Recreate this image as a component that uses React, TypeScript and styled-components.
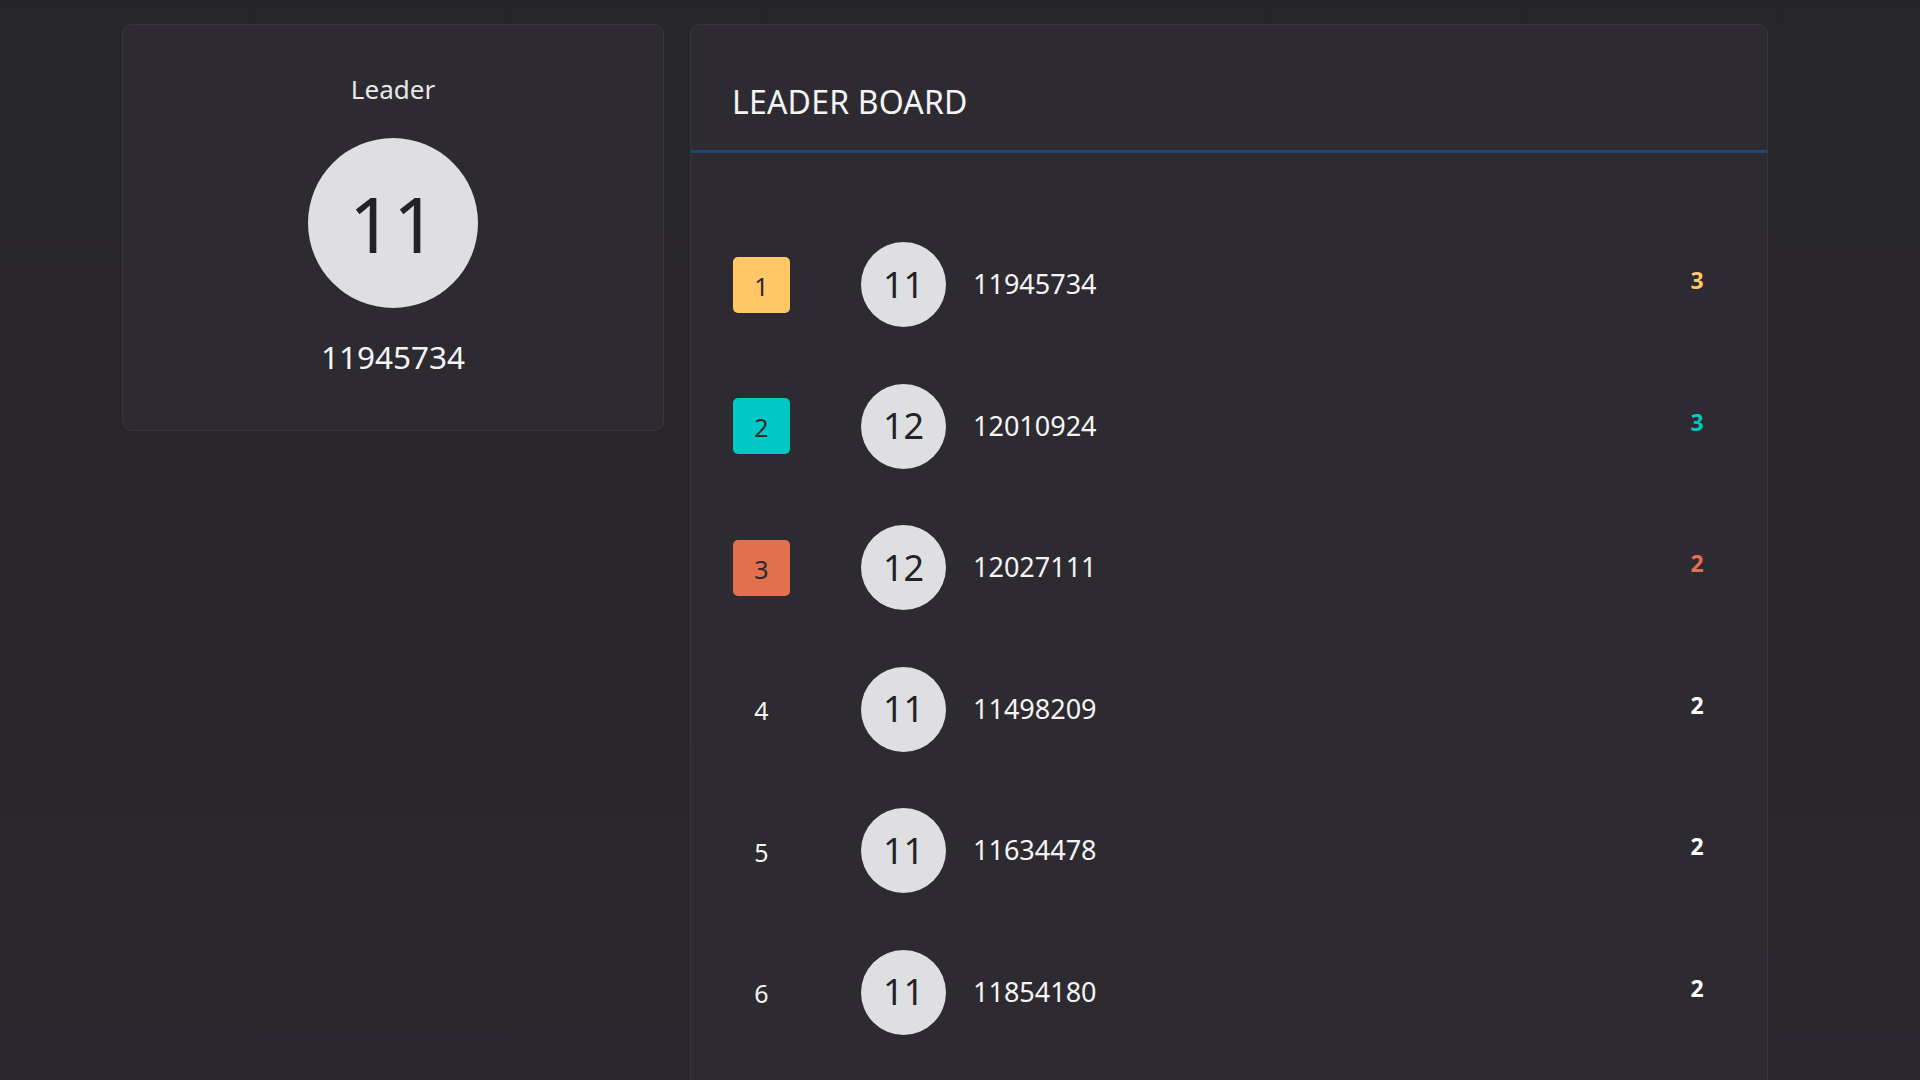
import styled, { createGlobalStyle } from 'styled-components';

interface Player {
  rank: number;
  group: string;
  id: string;
  score: number;
}

const players: Player[] = [
  { rank: 1, group: '11', id: '11945734', score: 3 },
  { rank: 2, group: '12', id: '12010924', score: 3 },
  { rank: 3, group: '12', id: '12027111', score: 2 },
  { rank: 4, group: '11', id: '11498209', score: 2 },
  { rank: 5, group: '11', id: '11634478', score: 2 },
  { rank: 6, group: '11', id: '11854180', score: 2 },
];

const rankColors: Record<number, string> = {
  1: '#ffc766',
  2: '#00c8c5',
  3: '#e2704f',
};

const GlobalStyle = createGlobalStyle`
  html, body {
    margin: 0;
    padding: 0;
    height: 100%;
    overflow: hidden;
  }
  body {
    background: linear-gradient(to bottom, #262528, #2b262d);
    font-family: "Noto Sans", "Open Sans", sans-serif;
    color: #f2f2f2;
  }
`;

const Page = styled.div`
  display: flex;
  align-items: flex-start;
  gap: 26px;
  padding: 24px 0 0 122px;
`;

const Card = styled.div`
  background: #2e2a31;
  border: 1px solid #3a363d;
  border-radius: 10px;
  box-sizing: border-box;
`;

const LeaderCard = styled(Card)`
  width: 542px;
  height: 407px;
  display: flex;
  flex-direction: column;
  align-items: center;
  padding-top: 51px;
`;

const LeaderLabel = styled.div`
  font-size: 26px;
  line-height: 1;
  color: #e8e8e8;
`;

const Avatar = styled.div<{ $size: number; $font: number }>`
  width: ${(p) => p.$size}px;
  height: ${(p) => p.$size}px;
  border-radius: 50%;
  background: #dfdee1;
  color: #232227;
  display: flex;
  align-items: center;
  justify-content: center;
  font-size: ${(p) => p.$font}px;
  line-height: 1;
  flex-shrink: 0;
`;

const BigAvatar = styled(Avatar)`
  margin-top: 36px;
`;

const LeaderId = styled.div`
  margin-top: 33px;
  font-size: 31.5px;
  line-height: 1;
  color: #f4f4f4;
`;

const BoardCard = styled(Card)`
  width: 1078px;
  padding-bottom: 60px;
  border-bottom-left-radius: 0;
  border-bottom-right-radius: 0;
`;

const BoardHeader = styled.div`
  height: 128px;
  display: flex;
  align-items: center;
  padding: 27px 0 0 41px;
  box-sizing: border-box;
  border-bottom: 3px solid #1f4878;
  font-size: 32px;
  letter-spacing: 0.2px;
  color: #f4f4f4;
`;

const RowList = styled.div`
  padding-top: 61px;
`;

const Row = styled.div`
  height: 141.5px;
  display: flex;
  align-items: center;
  padding: 0 50px 0 42px;
`;

const RankBox = styled.div<{ $color?: string }>`
  width: 57px;
  height: 56px;
  border-radius: 5px;
  background: ${(p) => p.$color ?? 'transparent'};
  color: ${(p) => (p.$color ? '#2b2a2e' : '#f2f2f2')};
  display: flex;
  align-items: center;
  justify-content: center;
  font-size: 25px;
  padding-top: 2px;
  box-sizing: border-box;
  flex-shrink: 0;
  margin-right: 71px;
`;

const PlayerId = styled.div`
  margin-left: 27px;
  flex: 1;
  font-size: 27px;
  color: #f4f4f4;
  padding-bottom: 2px;
`;

const Score = styled.div<{ $color?: string }>`
  width: 40px;
  text-align: center;
  font-size: 23px;
  font-weight: 700;
  color: ${(p) => p.$color ?? '#ffffff'};
  margin-bottom: 9px;
`;

export default function App() {
  const leader = players[0];
  return (
    <>
      <GlobalStyle />
      <Page>
        <LeaderCard>
          <LeaderLabel>Leader</LeaderLabel>
          <BigAvatar $size={170} $font={77}>
            {leader.group}
          </BigAvatar>
          <LeaderId>{leader.id}</LeaderId>
        </LeaderCard>

        <BoardCard>
          <BoardHeader>LEADER BOARD</BoardHeader>
          <RowList>
            {players.map((p) => (
              <Row key={p.id}>
                <RankBox $color={rankColors[p.rank]}>{p.rank}</RankBox>
                <Avatar $size={85} $font={36}>
                  {p.group}
                </Avatar>
                <PlayerId>{p.id}</PlayerId>
                <Score $color={rankColors[p.rank]}>{p.score}</Score>
              </Row>
            ))}
          </RowList>
        </BoardCard>
      </Page>
    </>
  );
}
